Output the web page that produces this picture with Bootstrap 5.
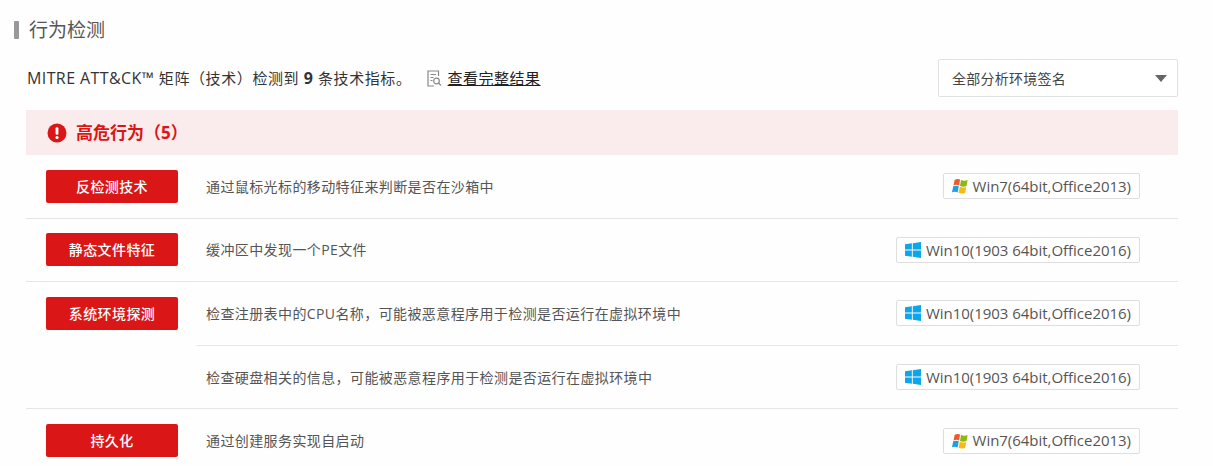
<!DOCTYPE html>
<html lang="zh-CN">
<head>
  <meta charset="UTF-8">
  <title>行为检测</title>
  <link href="https://cdn.jsdelivr.net/npm/bootstrap@5.3.3/dist/css/bootstrap.min.css" rel="stylesheet">
  <style>
    body { background: #fefefe; color: #444; font-family: "Open Sans", "Noto Sans CJK SC", sans-serif; overflow: hidden; }
    .page-wrap { padding: 19px 35px 0 14px; }
    .sec-title { height: 22px; font-size: 19px; line-height: 22px; color: #555; gap: 10px; }
    .sec-title::before { content: ""; width: 5px; height: 18px; background: #999; border-radius: 1px; }
    .intro-row { margin: 18px 0 13px 13px; height: 38px; font-size: 15px; letter-spacing: .6px; color: #333; }
    .intro-row b { color: #333; font-size: 16px; }
    .latin-run { font-size: 16px; letter-spacing: .4px; }
    .result-link { margin-left: 15px; color: #222; gap: 6px; }
    .result-link a { color: #222; font-size: 15px; letter-spacing: .5px; }
    .env-select { width: 240px; height: 38px; padding: 0 10px 0 13px; font-size: 14px; letter-spacing: .25px; color: #444; background: #fff; border: 1px solid #e1e1e1; border-radius: 2px; }
    .env-caret { width: 0; height: 0; border-left: 6.5px solid transparent; border-right: 6.5px solid transparent; border-top: 7px solid #666; }
    .risk-head { margin-left: 12px; height: 45px; padding-left: 21px; gap: 9px; background: #faecec; color: #da1617; font-size: 17px; font-weight: 700; }
    .behav-group { margin-left: 12px; border-bottom: 1px solid #e5e5e5; }
    .behav-group:last-child { border-bottom: 0; }
    .behav-label { flex: 0 0 171px; padding: 14.5px 0 0 20px; }
    .behav-chip { width: 132px; height: 33px; background: #da1617; color: #fff; font-size: 14px; letter-spacing: .4px; font-weight: 500; border-radius: 2px; }
    .behav-item { height: 62.6px; padding: 0 38px 0 9px; font-size: 14px; letter-spacing: .4px; color: #555; }
    .behav-item + .behav-item { height: 63.6px; border-top: 1px solid #e5e5e5; }
    .env-tag { height: 26px; padding: 0 8px; gap: 5px; font-size: 15px; letter-spacing: -.03px; color: #555; border: 1px solid #dedede; border-radius: 2px; background: #fff; white-space: nowrap; }
  </style>
</head>
<body>

<svg width="0" height="0" class="d-block position-absolute">
  <symbol id="win7" viewBox="0.8 1.6 13 12.2">
    <path fill="#f0592b" d="M3 2.600c1.600-.9 3.100-.8 4.400-.1L6.500 7.300C5 6.600 3.600 6.600 2 7.300z"/>
    <path fill="#8cb811" d="M8.100 2.700c1.700.9 3.400 1 5.400.2l-.9 4.900c-1.900.7-3.500.6-5.300-.2z"/>
    <path fill="#1ba1e2" d="M1.800 8c1.600-.7 3-.7 4.500 0l-.9 4.900c-1.500-.8-3-.8-4.600-.1z"/>
    <path fill="#fdb813" d="M7.100 8.300c1.800.8 3.400.9 5.300.2l-.9 4.800c-1.900.8-3.500.7-5.300-.1z"/>
  </symbol>
  <symbol id="win10" viewBox="1 1 14 14">
    <path fill="#0ea5e9" d="M1 3l6-.9v5.500H1zM7.800 2l7.200-1v6.600H7.800zM1 8.400h6v5.500l-6-.9zM7.800 8.400H15V15l-7.200-1z"/>
  </symbol>
</svg>

<div class="page-wrap">
  <div class="sec-title d-flex align-items-center">行为检测</div>

  <div class="intro-row d-flex align-items-center justify-content-between">
    <div class="d-flex align-items-center">
      <span><span class="latin-run">MITRE ATT&amp;CK™</span> 矩阵（技术）检测到 <b>9</b> 条技术指标。</span>
      <span class="result-link d-inline-flex align-items-center">
        <svg width="15" height="17" viewBox="0 0 15 17" fill="none" stroke="#888" stroke-width="1.200">
          <path d="M11.500 6V1H1v15h6"/>
          <path d="M3.500 4.500h5.500M3.500 7.500h3M3.500 10.500h2"/>
          <circle cx="9.500" cy="11" r="2.800"/>
          <path d="M11.500 13l2.500 2.500"/>
        </svg>
        <a href="#">查看完整结果</a>
      </span>
    </div>
    <div class="env-select d-flex align-items-center justify-content-between">
      <span>全部分析环境签名</span>
      <span class="env-caret"></span>
    </div>
  </div>

  <div class="risk-head d-flex align-items-center">
    <svg width="20" height="20" viewBox="0 0 20 20">
      <circle cx="10" cy="10" r="9.500" fill="#da1617"/>
      <rect x="8.600" y="4.200" width="2.800" height="7.600" rx="1" fill="#fff"/>
      <circle cx="10" cy="14.500" r="1.600" fill="#fff"/>
    </svg>
    <span>高危行为（5）</span>
  </div>

  <div class="behav-group d-flex">
    <div class="behav-label"><div class="behav-chip d-flex align-items-center justify-content-center">反检测技术</div></div>
    <div class="flex-grow-1">
      <div class="behav-item d-flex align-items-center justify-content-between">
        <span>通过鼠标光标的移动特征来判断是否在沙箱中</span>
        <span class="env-tag d-inline-flex align-items-center"><svg width="16" height="16"><use href="#win7"/></svg>Win7(64bit,Office2013)</span>
      </div>
    </div>
  </div>

  <div class="behav-group d-flex">
    <div class="behav-label"><div class="behav-chip d-flex align-items-center justify-content-center">静态文件特征</div></div>
    <div class="flex-grow-1">
      <div class="behav-item d-flex align-items-center justify-content-between">
        <span>缓冲区中发现一个PE文件</span>
        <span class="env-tag d-inline-flex align-items-center"><svg width="16" height="16"><use href="#win10"/></svg>Win10(1903 64bit,Office2016)</span>
      </div>
    </div>
  </div>

  <div class="behav-group d-flex">
    <div class="behav-label"><div class="behav-chip d-flex align-items-center justify-content-center">系统环境探测</div></div>
    <div class="flex-grow-1">
      <div class="behav-item d-flex align-items-center justify-content-between">
        <span>检查注册表中的CPU名称，可能被恶意程序用于检测是否运行在虚拟环境中</span>
        <span class="env-tag d-inline-flex align-items-center"><svg width="16" height="16"><use href="#win10"/></svg>Win10(1903 64bit,Office2016)</span>
      </div>
      <div class="behav-item d-flex align-items-center justify-content-between">
        <span>检查硬盘相关的信息，可能被恶意程序用于检测是否运行在虚拟环境中</span>
        <span class="env-tag d-inline-flex align-items-center"><svg width="16" height="16"><use href="#win10"/></svg>Win10(1903 64bit,Office2016)</span>
      </div>
    </div>
  </div>

  <div class="behav-group d-flex">
    <div class="behav-label"><div class="behav-chip d-flex align-items-center justify-content-center">持久化</div></div>
    <div class="flex-grow-1">
      <div class="behav-item d-flex align-items-center justify-content-between">
        <span>通过创建服务实现自启动</span>
        <span class="env-tag d-inline-flex align-items-center"><svg width="16" height="16"><use href="#win7"/></svg>Win7(64bit,Office2013)</span>
      </div>
    </div>
  </div>
</div>

<script src="https://cdn.jsdelivr.net/npm/bootstrap@5.3.3/dist/js/bootstrap.bundle.min.js"></script>
</body>
</html>
